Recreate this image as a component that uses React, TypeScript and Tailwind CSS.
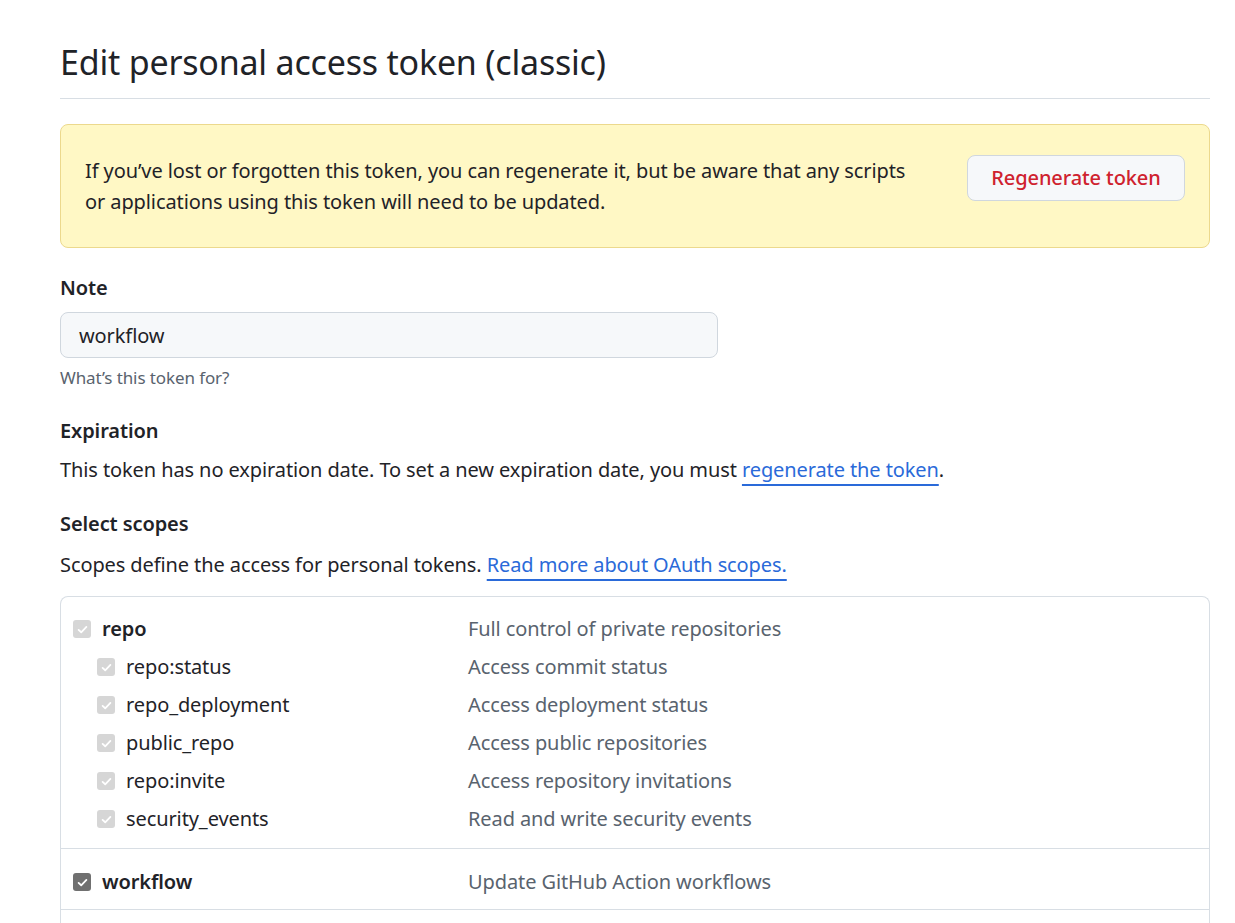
const scopes = [
  { name: "repo:status", desc: "Access commit status" },
  { name: "repo_deployment", desc: "Access deployment status" },
  { name: "public_repo", desc: "Access public repositories" },
  { name: "repo:invite", desc: "Access repository invitations" },
  { name: "security_events", desc: "Read and write security events" },
]

function Check({ disabled }: { disabled?: boolean }) {
  return (
    <span
      className={`flex h-[18px] w-[18px] shrink-0 items-center justify-center rounded-[3px] ${
        disabled ? "bg-[#d6d6d6]" : "bg-[#707070]"
      }`}
    >
      <svg viewBox="0 0 16 16" className="h-[13px] w-[13px]" fill="none">
        <path
          d="M3.2 8.4 6.4 11.4 12.8 4.8"
          stroke="white"
          strokeWidth="2.2"
          strokeLinecap="round"
          strokeLinejoin="round"
        />
      </svg>
    </span>
  )
}

export default function App() {
  return (
    <main
      className="min-h-screen bg-white pl-[60px] pr-[25px] pt-[38px] text-[20px] tracking-[-0.1px] text-[#1f2328]"
      style={{ fontFamily: '"Noto Sans", "Open Sans", sans-serif' }}
    >
      <h1 className="border-b border-[#d8dee4] pb-[12px] text-[34px] font-normal leading-[48px] tracking-[-0.2px]">
        Edit personal access token (classic)
      </h1>

      <div className="mt-[25px] flex h-[124px] items-center justify-between rounded-[8px] border border-[#ecd98d] bg-[#fff8c5] pl-[24px] pr-[24px]">
        <p className="max-w-[840px] leading-[31px]">
          If you’ve lost or forgotten this token, you can regenerate it, but be aware that any scripts or
          applications using this token will need to be updated.
        </p>
        <button
          type="button"
          className="mb-[16px] h-[46px] w-[218px] rounded-[8px] border border-[#d0d7de] bg-[#f6f8fa] font-medium text-[#cf222e]"
        >
          Regenerate token
        </button>
      </div>

      <div className="mt-[25px]">
        <label className="block font-semibold leading-[30px]">Note</label>
        <div className="mt-[9px] flex h-[46px] w-[658px] items-center rounded-[8px] border border-[#d0d7de] bg-[#f6f8fa] px-[18px] pt-[2px]">
          workflow
        </div>
        <p className="mt-[8px] text-[17px] leading-[24px] text-[#59636e]">What’s this token for?</p>
      </div>

      <div className="mt-[26px]">
        <h3 className="font-semibold leading-[30px]">Expiration</h3>
        <p className="mt-[9px] leading-[30px]">
          This token has no expiration date. To set a new expiration date, you must{" "}
          <a className="text-[#2a6ad9] underline decoration-2 underline-offset-[7px]">
            regenerate the token
          </a>
          .
        </p>
      </div>

      <div className="mt-[24px]">
        <h3 className="font-semibold leading-[30px]">Select scopes</h3>
        <p className="mt-[11px] leading-[30px]">
          Scopes define the access for personal tokens.{" "}
          <a className="text-[#2a6ad9] underline decoration-2 underline-offset-[7px]">
            Read more about OAuth scopes.
          </a>
        </p>
      </div>

      <div className="mt-[16px] rounded-t-[8px] border border-b-0 border-[#d8dee4]">
        <div className="border-b border-[#d8dee4] pb-[10px] pt-[13px]">
          <div className="flex h-[38px] items-center">
            <div className="flex w-[407px] items-center gap-[11px] pl-[12px]">
              <Check disabled />
              <span className="font-semibold">repo</span>
            </div>
            <span className="text-[#59636e]">Full control of private repositories</span>
          </div>
          {scopes.map((s) => (
            <div key={s.name} className="flex h-[38px] items-center">
              <div className="flex w-[407px] items-center gap-[11px] pl-[36px]">
                <Check disabled />
                <span>{s.name}</span>
              </div>
              <span className="text-[#59636e]">{s.desc}</span>
            </div>
          ))}
        </div>
        <div className="flex h-[61px] items-center border-b border-[#d8dee4] pt-[6px]">
          <div className="flex w-[407px] items-center gap-[11px] pl-[12px]">
            <Check />
            <span className="font-semibold">workflow</span>
          </div>
          <span className="text-[#59636e]">Update GitHub Action workflows</span>
        </div>
        <div className="h-[40px]" />
      </div>
    </main>
  )
}
